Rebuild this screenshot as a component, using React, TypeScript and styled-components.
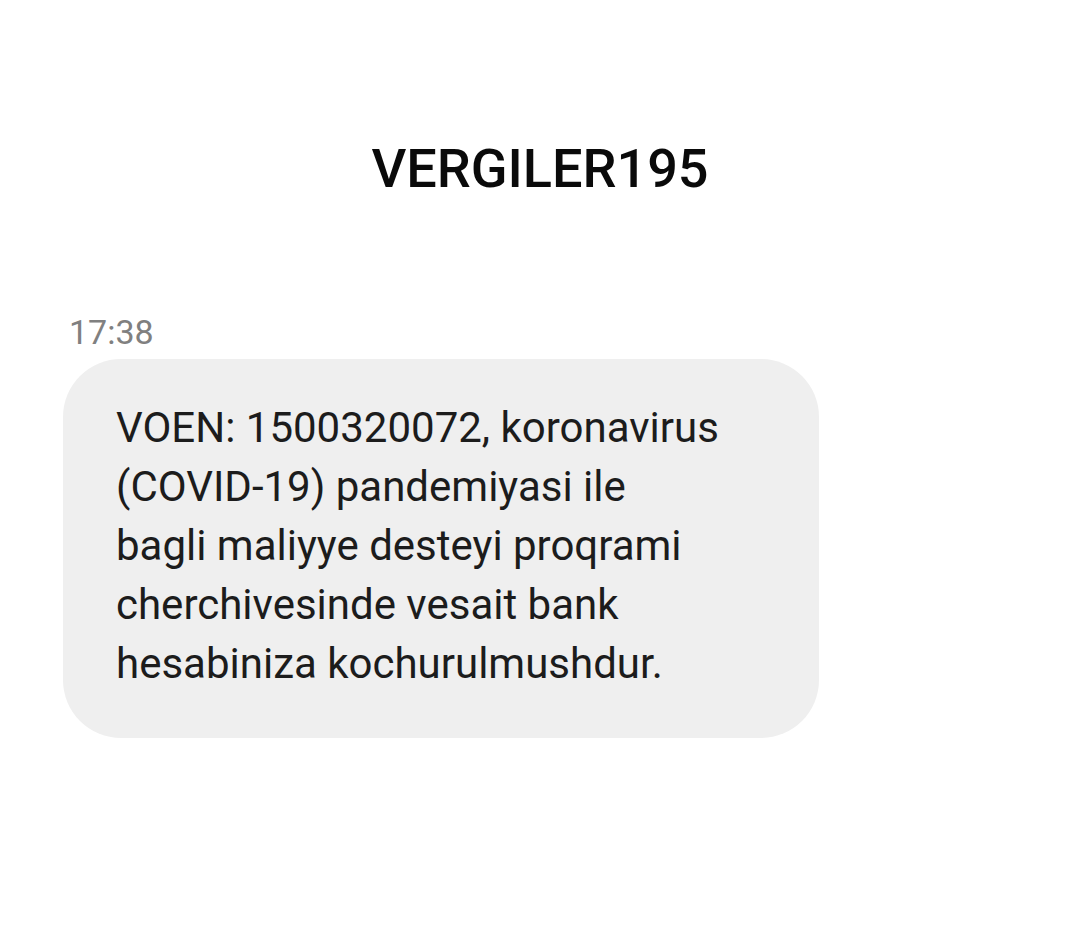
import styled, { createGlobalStyle } from "styled-components";

const GlobalStyle = createGlobalStyle`
  body {
    margin: 0;
    background: #ffffff;
    font-family: Roboto, "Noto Sans", sans-serif;
  }
`;

const Screen = styled.div`
  display: flex;
  flex-direction: column;
  width: 1080px;
  height: 934px;
  padding-top: 139px;
  box-sizing: border-box;
  background: #ffffff;
`;

const Sender = styled.h1`
  margin: 0;
  text-align: center;
  font-size: 54px;
  line-height: 60px;
  font-weight: 500;
  color: #0a0a0a;
`;

const Thread = styled.div`
  display: flex;
  flex-direction: column;
  align-items: flex-start;
  gap: 7px;
  padding: 113px 0 0 63px;
`;

const Time = styled.span`
  margin-left: 6px;
  font-size: 34px;
  line-height: 40px;
  color: #808080;
`;

const Bubble = styled.div`
  width: 756px;
  box-sizing: border-box;
  padding: 39px 20px 45px 53px;
  border-radius: 58px;
  background: #efefef;
  color: #1c1c1c;
  font-size: 42px;
  line-height: 59px;
  white-space: pre-line;
`;

const message = `VOEN: 1500320072, koronavirus
(COVID-19) pandemiyasi ile
bagli maliyye desteyi proqrami
cherchivesinde vesait bank
hesabiniza kochurulmushdur.`;

export default function App() {
  return (
    <>
      <GlobalStyle />
      <Screen>
        <Sender>VERGILER195</Sender>
        <Thread>
          <Time>17:38</Time>
          <Bubble>{message}</Bubble>
        </Thread>
      </Screen>
    </>
  );
}
